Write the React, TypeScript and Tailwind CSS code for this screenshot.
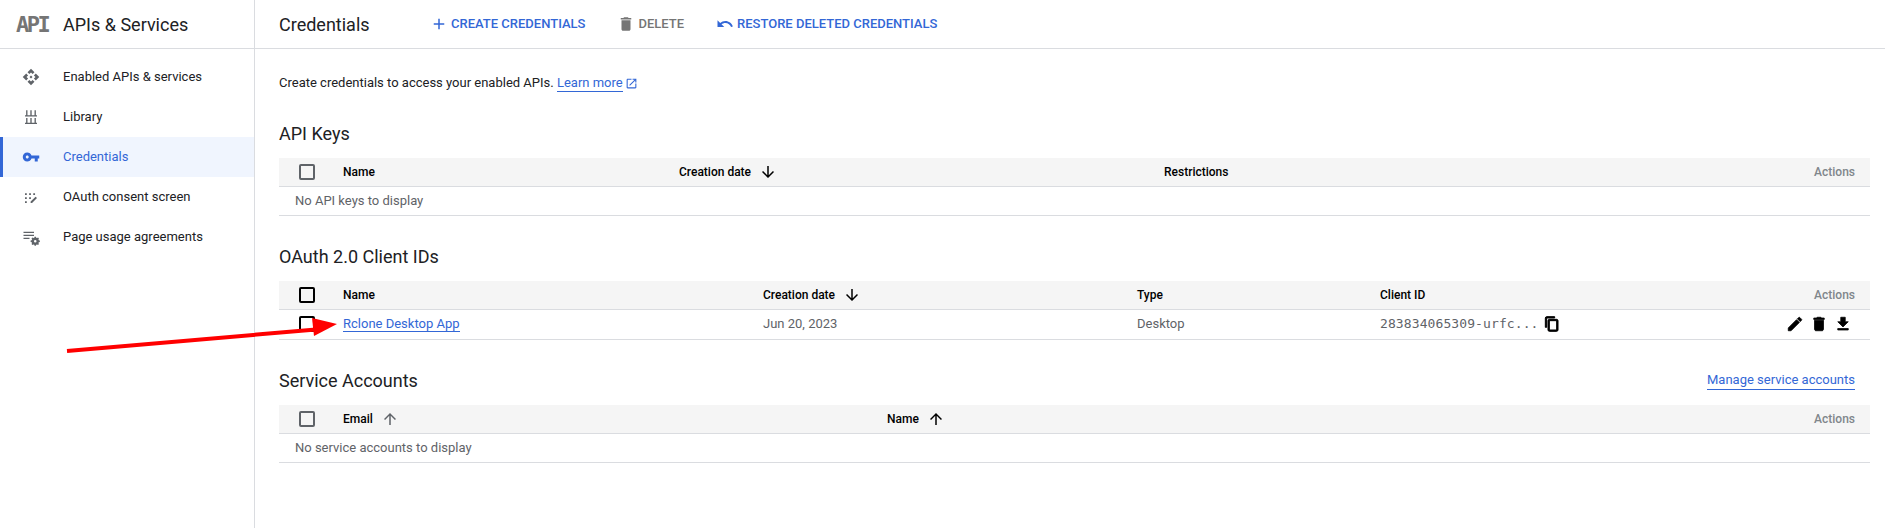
const paths = {
  api: "M14 12l-2 2-2-2 2-2 2 2zm-2-6l2.12 2.12 2.5-2.5L12 1 7.38 5.62l2.5 2.5L12 6zm-6 6l2.12-2.12-2.5-2.5L1 12l4.62 4.62 2.5-2.5L6 12zm12 0l-2.12 2.12 2.5 2.5L23 12l-4.62-4.62-2.5 2.5L18 12zm-6 6l-2.12-2.12-2.5 2.5L12 23l4.62-4.62-2.5-2.5L12 18z",
  key: "M12.65 10C11.83 7.67 9.61 6 7 6c-3.31 0-6 2.69-6 6s2.69 6 6 6c2.61 0 4.83-1.67 5.65-4H17v4h4v-4h2v-4H12.65zM7 14c-1.1 0-2-.9-2-2s.9-2 2-2 2 .9 2 2-.9 2-2 2z",
  library: "M5.5 3h1.8v6.5H5.5V3zm5.6 0h1.8v6.5h-1.8V3zm5.6 0h1.8v6.5h-1.8V3zM4 9.7h16v1.6H4V9.7zM5.5 13.2h1.8v6.3H5.5v-6.3zm5.6 0h1.8v6.3h-1.8v-6.3zm5.6 0h1.8v6.3h-1.8v-6.3zM4 19.7h16v1.6H4v-1.6z",
  consent: "M4 7h2.4v2.4H4V7zm5.5 0h2.4v2.4H9.5V7zM15 7h2.4v2.4H15V7zM4 12.3h2.4v2.4H4v-2.4zm5.5 0h2.4v2.4H9.5v-2.4zM4 17.6h2.4V20H4v-2.4zm7.5 2.4v-1.9l6.6-6.6 1.9 1.9-6.6 6.6h-1.9z",
  usage: "M2 5h14v1.6H2V5zm0 4h14v1.6H2V9zm0 4h8v1.6H2V13zm16.5-1.5l.4 1.4 1.2.5 1.3-.7 1.2 1.2-.7 1.3.5 1.2 1.4.4v1.7l-1.4.4-.5 1.2.7 1.3-1.2 1.2-1.3-.7-1.2.5-.4 1.4h-1.7l-.4-1.4-1.2-.5-1.3.7-1.2-1.2.7-1.3-.5-1.2-1.4-.4v-1.7l1.4-.4.5-1.2-.7-1.3 1.2-1.2 1.3.7 1.2-.5.4-1.4h1.7zm-.85 4.5a1.7 1.7 0 100 3.4 1.7 1.7 0 000-3.4z",
  add: "M19 13h-6v6h-2v-6H5v-2h6V5h2v6h6v2z",
  del: "M6 19c0 1.1.9 2 2 2h8c1.1 0 2-.9 2-2V7H6v12zM19 4h-3.5l-1-1h-5l-1 1H5v2h14V4z",
  undo: "M12.5 8c-2.65 0-5.05.99-6.9 2.6L2 7v9h9l-3.62-3.62c1.39-1.16 3.16-1.88 5.12-1.88 3.54 0 6.55 2.31 7.6 5.5l2.37-.78C21.08 11.03 17.15 8 12.5 8z",
  down: "M20 12l-1.41-1.41L13 16.17V4h-2v12.17l-5.58-5.59L4 12l8 8 8-8z",
  up: "M4 12l1.41 1.41L11 7.83V20h2V7.83l5.58 5.59L20 12l-8-8-8 8z",
  copy: "M16 1H4c-1.1 0-2 .9-2 2v14h2V3h12V1zm3 4H8c-1.1 0-2 .9-2 2v14c0 1.1.9 2 2 2h11c1.1 0 2-.9 2-2V7c0-1.1-.9-2-2-2zm0 16H8V7h11v14z",
  edit: "M3 17.25V21h3.75L17.81 9.94l-3.75-3.75L3 17.25zM20.71 7.04c.39-.39.39-1.02 0-1.41l-2.34-2.34c-.39-.39-1.02-.39-1.41 0l-1.83 1.83 3.75 3.75 1.83-1.83z",
  download: "M19 9h-4V3H9v6H5l7 7 7-7zM5 18v2h14v-2H5z",
  open: "M19 19H5V5h7V3H5c-1.11 0-2 .9-2 2v14c0 1.1.89 2 2 2h14c1.1 0 2-.9 2-2v-7h-2v7zM14 3v2h3.59l-9.83 9.83 1.41 1.41L19 6.41V10h2V3h-7z",
};

function Icon({ d, className }: { d: string; className: string }) {
  return (
    <svg viewBox="0 0 24 24" fill="currentColor" className={className}>
      <path d={d} />
    </svg>
  );
}

function Checkbox({ dark }: { dark?: boolean }) {
  return (
    <span
      className={`block h-[16px] w-[16px] rounded-[2px] border-2 ${dark ? "border-black" : "border-[#5f6368]"}`}
    />
  );
}

function HeaderLabel({ children, arrow, faint }: { children: string; arrow?: string; faint?: boolean }) {
  return (
    <div className="flex items-center text-[12px] font-medium text-black">
      <span>{children}</span>
      {arrow && (
        <Icon d={arrow} className={`ml-[8px] h-[18px] w-[18px] ${faint ? "text-[#5f6368]" : "text-black"}`} />
      )}
    </div>
  );
}

function ActionsLabel() {
  return <div className="ml-auto pr-[15px] text-[12px] font-medium text-[#80868b]">Actions</div>;
}

function Section({ title, right, children }: { title: string; right?: React.ReactNode; children: React.ReactNode }) {
  return (
    <section className="mb-7">
      <div className="mb-[13px] flex h-6 items-center justify-between">
        <h2 className="text-[18px] font-normal text-[#202124]">{title}</h2>
        {right}
      </div>
      {children}
    </section>
  );
}

function HeadRow({ children, dark }: { children: React.ReactNode; dark?: boolean }) {
  return (
    <div className="flex h-[29px] items-center border-b border-[#dadce0] bg-[#f5f5f5]">
      <div className="flex w-[64px] shrink-0 pl-[20px]">
        <Checkbox dark={dark} />
      </div>
      {children}
    </div>
  );
}

function EmptyRow({ text }: { text: string }) {
  return (
    <div className="flex h-[29px] items-center border-b border-[#dadce0] pl-[16px] text-[#5f6368]">{text}</div>
  );
}

const navItems = [
  { label: "Enabled APIs & services", d: paths.api },
  { label: "Library", d: paths.library },
  { label: "Credentials", d: paths.key, active: true },
  { label: "OAuth consent screen", d: paths.consent },
  { label: "Page usage agreements", d: paths.usage },
];

export default function App() {
  return (
    <div className="relative flex h-screen overflow-hidden bg-white font-['Roboto',sans-serif] text-[13px] text-[#202124]">
      {/* Sidebar */}
      <aside className="w-[255px] shrink-0 border-r border-[#dadce0]">
        <div className="flex h-[49px] items-center border-b border-[#dadce0] pl-[16px]">
          <span className="w-[47px] font-['DejaVu_Sans_Mono',monospace] text-[22px] font-bold tracking-[-2.5px] text-[#757575]">
            API
          </span>
          <span className="text-[18px] text-[#202124]">APIs &amp; Services</span>
        </div>
        <nav className="pt-[8px]">
          {navItems.map((item) => (
            <div
              key={item.label}
              className={`flex h-[40px] items-center border-l-[3px] pl-[19px] ${
                item.active ? "border-[#3367d6] bg-[#f0f5fe] text-[#3367d6]" : "border-transparent"
              }`}
            >
              <Icon
                d={item.d}
                className={`mr-[23px] h-[18px] w-[18px] shrink-0 ${item.active ? "text-[#3367d6]" : "text-[#5f6368]"}`}
              />
              <span>{item.label}</span>
            </div>
          ))}
        </nav>
      </aside>

      <main className="min-w-0 flex-1">
        {/* Toolbar */}
        <div className="flex h-[49px] items-center border-b border-[#dadce0] pl-[24px]">
          <h1 className="w-[151px] text-[18px] font-normal text-[#202124]">Credentials</h1>
          <div className="flex items-center font-medium text-[#3367d6]">
            <Icon d={paths.add} className="mr-[3px] h-[18px] w-[18px]" />
            CREATE CREDENTIALS
          </div>
          <div className="ml-[32px] flex items-center font-medium text-[#757575]">
            <Icon d={paths.del} className="mr-[3px] h-[18px] w-[18px]" />
            DELETE
          </div>
          <div className="ml-[32px] flex items-center font-medium text-[#3367d6]">
            <Icon d={paths.undo} className="mr-[3px] h-[18px] w-[18px]" />
            RESTORE DELETED CREDENTIALS
          </div>
        </div>

        <div className="pl-[24px] pr-[15px] pt-[24px]">
          <p className="mb-[28px] flex h-[20px] items-center">
            Create credentials to access your enabled APIs.&nbsp;
            <a className="border-b border-[#3367d6] leading-[16px] text-[#3367d6]">Learn more</a>
            <Icon d={paths.open} className="ml-[2px] h-[13px] w-[13px] text-[#3367d6]" />
          </p>

          <Section title="API Keys">
            <HeadRow>
              <div className="w-[336px]">
                <HeaderLabel>Name</HeaderLabel>
              </div>
              <div className="w-[485px]">
                <HeaderLabel arrow={paths.down}>Creation date</HeaderLabel>
              </div>
              <HeaderLabel>Restrictions</HeaderLabel>
              <ActionsLabel />
            </HeadRow>
            <EmptyRow text="No API keys to display" />
          </Section>

          <Section title="OAuth 2.0 Client IDs">
            <HeadRow dark>
              <div className="w-[420px]">
                <HeaderLabel>Name</HeaderLabel>
              </div>
              <div className="w-[374px]">
                <HeaderLabel arrow={paths.down}>Creation date</HeaderLabel>
              </div>
              <div className="w-[243px]">
                <HeaderLabel>Type</HeaderLabel>
              </div>
              <HeaderLabel>Client ID</HeaderLabel>
              <ActionsLabel />
            </HeadRow>
            <div className="flex h-[30px] items-center border-b border-[#dadce0] pb-[2px] text-[#5f6368]">
              <div className="flex w-[64px] shrink-0 pl-[20px]">
                <Checkbox dark />
              </div>
              <div className="w-[420px]">
                <a className="border-b border-[#3367d6] text-[#3367d6]">Rclone Desktop App</a>
              </div>
              <div className="w-[374px]">Jun 20, 2023</div>
              <div className="w-[243px]">Desktop</div>
              <div className="flex items-center">
                <span className="font-['DejaVu_Sans_Mono',monospace] text-[13px] tracking-[0.1px]">
                  283834065309-urfc...
                </span>
                <Icon d={paths.copy} className="ml-[5px] h-[16px] w-[16px] stroke-current stroke-[1.5] text-black" />
              </div>
              <div className="ml-auto flex items-center gap-[6px] pr-[18px] text-black">
                <Icon d={paths.edit} className="h-[18px] w-[18px] stroke-current stroke-1" />
                <Icon d={paths.del} className="h-[18px] w-[18px] stroke-current stroke-1" />
                <Icon d={paths.download} className="h-[18px] w-[18px] stroke-current stroke-1" />
              </div>
            </div>
          </Section>

          <Section
            title="Service Accounts"
            right={<a className="mr-[15px] border-b border-[#3367d6] text-[#3367d6]">Manage service accounts</a>}
          >
            <HeadRow>
              <div className="w-[544px]">
                <HeaderLabel arrow={paths.up} faint>
                  Email
                </HeaderLabel>
              </div>
              <HeaderLabel arrow={paths.up}>Name</HeaderLabel>
              <ActionsLabel />
            </HeadRow>
            <EmptyRow text="No service accounts to display" />
          </Section>
        </div>
      </main>

      {/* Red annotation arrow drawn over the page */}
      <svg className="pointer-events-none absolute left-0 top-0 h-full w-full" viewBox="0 0 1885 528">
        <path d="M67 351 L316 329.5" stroke="#ff0000" strokeWidth="4" fill="none" />
        <path d="M337 324 L312 318 L314 336 Z" fill="#ff0000" />
      </svg>
    </div>
  );
}
